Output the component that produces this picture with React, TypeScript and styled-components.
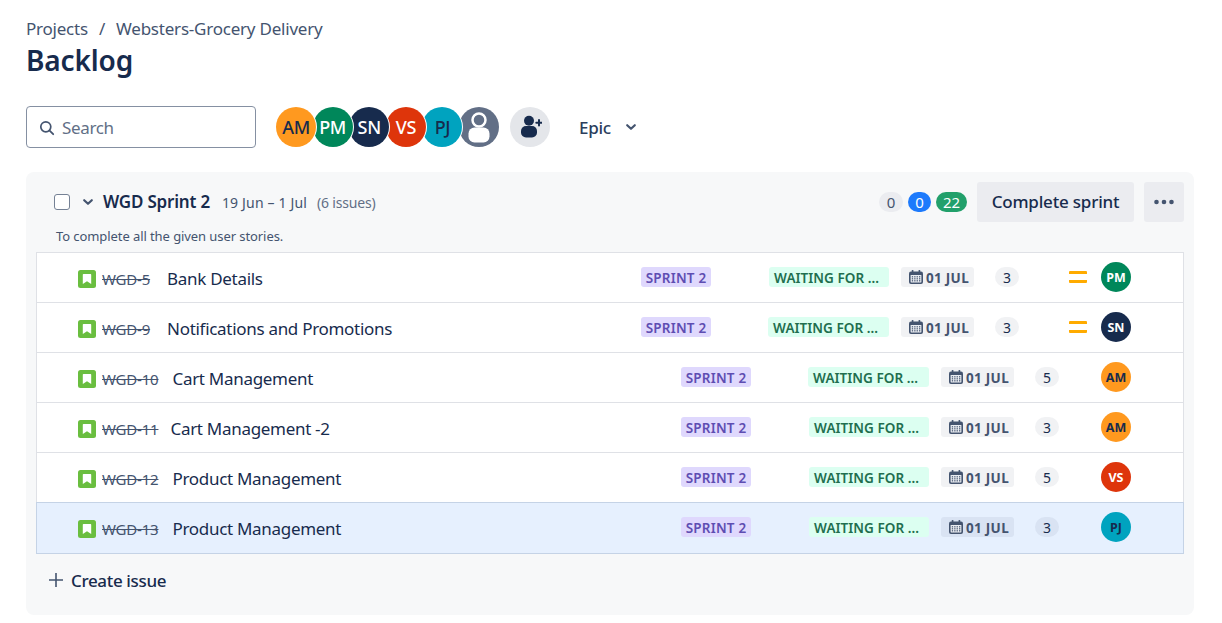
import React from "react";
import styled, { createGlobalStyle } from "styled-components";

const Global = createGlobalStyle`
  html, body { margin: 0; padding: 0; background: #fff; }
  body { font-family: "Noto Sans", "Open Sans", sans-serif; color: #172B4D; }
  * { box-sizing: border-box; }
`;

const Page = styled.div`
  width: 1222px;
  height: 623px;
  overflow: hidden;
  padding: 18px 28px 0 26px;
`;
const Crumbs = styled.div`
  display: flex;
  gap: 11px;
  height: 22px;
  line-height: 22px;
  font-size: 17px;
  letter-spacing: -0.22px;
  color: #44546F;
`;
const Title = styled.h1`
  margin: 0;
  height: 40px;
  line-height: 40px;
  font-size: 28px;
  font-weight: 600;
  letter-spacing: -0.15px;
  color: #172B4D;
`;
const Toolbar = styled.div`
  display: flex;
  align-items: center;
  height: 42px;
  margin-top: 26px;
`;
const SearchBox = styled.div`
  display: flex;
  align-items: center;
  gap: 6px;
  width: 230px;
  height: 42px;
  padding: 1px 12px 0 11px;
  border: 1px solid #8590A2;
  border-radius: 4px;
  font-size: 17px;
  letter-spacing: -0.35px;
  color: #626F86;
`;
const AvatarStack = styled.div`
  display: flex;
  margin-left: 20px;
  margin-top: -1px;
`;
const StackAvatar = styled.div<{ $bg: string; $fg: string; $order: number }>`
  position: relative;
  z-index: ${(p) => p.$order};
  width: 40px;
  height: 40px;
  margin-right: -3.4px;
  border-radius: 50%;
  overflow: hidden;
  display: flex;
  align-items: center;
  justify-content: center;
  background: ${(p) => p.$bg};
  color: ${(p) => p.$fg};
  box-shadow: 0 0 0 1px #fff;
  font-size: 18px;
  font-weight: 500;
  letter-spacing: -0.3px;
`;
const AddUser = styled.div`
  width: 40px;
  height: 40px;
  margin-left: 14.4px;
  margin-top: -1px;
  border-radius: 50%;
  background: #E4E6EA;
  display: flex;
  align-items: center;
  justify-content: center;
`;
const EpicFilter = styled.div`
  display: flex;
  align-items: center;
  gap: 12px;
  margin-left: 29px;
  font-size: 17px;
  font-weight: 500;
  letter-spacing: -0.3px;
  color: #2C3E5D;
`;
const Card = styled.section`
  margin-top: 24px;
  width: 1168px;
  height: 443px;
  padding: 10px 10px 0;
  border-radius: 8px;
  background: #F7F8F9;
`;
const CardHeader = styled.div`
  display: flex;
  align-items: center;
  height: 40px;
  padding-left: 18px;
`;
const Checkbox = styled.span`
  width: 16px;
  height: 16px;
  border: 1px solid #758195;
  border-radius: 3px;
  background: #fff;
`;
const SprintName = styled.span`
  margin-left: 7px;
  margin-top: -1px;
  font-size: 17px;
  font-weight: 600;
  letter-spacing: -0.2px;
`;
const Dates = styled.span`
  margin-left: 12px;
  font-size: 14px;
  letter-spacing: 0.17px;
  color: #44546F;
`;
const IssueCount = styled.span`
  margin-left: 10px;
  font-size: 14px;
  letter-spacing: -0.2px;
  color: #626F86;
`;
const HeaderRight = styled.div`
  margin-left: auto;
  display: flex;
  align-items: center;
`;
const Count = styled.span<{ $bg: string; $fg: string; $w: number; $gap: number }>`
  width: ${(p) => p.$w}px;
  margin-right: ${(p) => p.$gap}px;
  height: 20px;
  line-height: 20px;
  text-align: center;
  border-radius: 10px;
  font-size: 15px;
  background: ${(p) => p.$bg};
  color: ${(p) => p.$fg};
`;
const Button = styled.button`
  height: 40px;
  width: 157px;
  padding: 0 0 2px;
  border: 0;
  border-radius: 3px;
  background: #EBECF0;
  font-family: inherit;
  font-size: 17px;
  font-weight: 500;
  letter-spacing: -0.2px;
  color: #172B4D;
`;
const MoreButton = styled.button`
  width: 40px;
  height: 40px;
  margin-left: 10px;
  border: 0;
  padding: 0;
  border-radius: 3px;
  background: #EBECF0;
  display: flex;
  align-items: center;
  justify-content: center;
`;
const Goal = styled.div`
  height: 30px;
  padding: 6px 0 0 20px;
  line-height: 16px;
  font-size: 13px;
  letter-spacing: -0.08px;
  color: #44546F;
`;
const Table = styled.div`
  width: 1148px;
  border: 1px solid #DFE1E6;
  border-bottom: 0;
  background: #fff;
`;
const Row = styled.div<{ $selected?: boolean }>`
  display: flex;
  align-items: center;
  height: 50px;
  padding: 0 52px 0 41px;
  border-bottom: 1px solid #DFE1E6;
  background: #fff;
  ${(p) =>
    p.$selected &&
    "margin: -1px -1px 0; height: 52px; padding-bottom: 1px; border: 1px solid #C5D3E6; background: #E6F0FE;"}
`;
const Lead = styled.div`
  display: flex;
  align-items: center;
  margin-top: 2px;
`;
const IssueKey = styled.span`
  margin-left: 6px;
  font-size: 15px;
  letter-spacing: -0.2px;
  color: #44546F;
  text-decoration: line-through;
`;
const IssueTitle = styled.span<{ $gap: number }>`
  margin-left: ${(p) => p.$gap}px;
  font-size: 17px;
  letter-spacing: -0.3px;
  color: #172B4D;
`;
const Right = styled.div`
  margin-left: auto;
  margin-top: -1px;
  display: flex;
  align-items: center;
`;
const SprintTag = styled.span`
  width: 70px;
  height: 20px;
  line-height: 22px;
  text-align: center;
  border-radius: 3px;
  background: #DFD8FD;
  color: #5E4DB2;
  font-size: 13.5px;
  font-weight: 600;
  letter-spacing: 0.2px;
  white-space: nowrap;
`;
const StatusTag = styled.span<{ $wide?: boolean }>`
  width: ${(p) => (p.$wide ? 121 : 120)}px;
  margin-left: ${(p) => (p.$wide ? 57 : 58)}px;
  height: 20px;
  line-height: 22px;
  padding-left: 5px;
  border-radius: 3px;
  background: #DCFFF1;
  color: #216E4E;
  font-size: 13.5px;
  font-weight: 600;
  letter-spacing: 0.05px;
  white-space: nowrap;
`;
const DateChip = styled.span`
  display: flex;
  align-items: center;
  gap: 2px;
  width: 73px;
  height: 20px;
  margin-left: 12px;
  padding-left: 7px;
  border-radius: 3px;
  background: rgba(9, 30, 66, 0.06);
  color: #44546F;
  font-size: 13.5px;
  font-weight: 700;
  letter-spacing: 0.3px;
  white-space: nowrap;
`;
const DateText = styled.span`
  line-height: 22px;
  height: 20px;
`;
const Points = styled.span`
  width: 24px;
  height: 20px;
  margin-left: 21px;
  line-height: 21px;
  text-align: center;
  border-radius: 10px;
  background: rgba(9, 30, 66, 0.06);
  font-size: 14px;
  color: #172B4D;
`;
const Priority = styled.span`
  width: 18px;
  height: 12px;
  margin-left: 50px;
  border-top: 3px solid #FFAB00;
  border-bottom: 3px solid #FFAB00;
  border-radius: 1px;
`;
const Assignee = styled.div<{ $bg: string; $fg: string; $gap: number }>`
  width: 30px;
  height: 30px;
  margin-left: ${(p) => p.$gap}px;
  border-radius: 50%;
  display: flex;
  align-items: center;
  justify-content: center;
  background: ${(p) => p.$bg};
  color: ${(p) => p.$fg};
  font-size: 12.5px;
  font-weight: 700;
`;
const CreateIssue = styled.div`
  display: flex;
  align-items: center;
  gap: 7px;
  height: 52px;
  padding-left: 12px;
  font-size: 17px;
  font-weight: 500;
  letter-spacing: -0.35px;
  color: #172B4D;
`;

const people: Record<string, [string, string]> = {
  AM: ["#FF991F", "#172B4D"],
  PM: ["#00875A", "#fff"],
  SN: ["#172B4D", "#fff"],
  VS: ["#DE350B", "#fff"],
  PJ: ["#00A3BF", "#172B4D"],
};

const Chevron = ({ size = 16, style }: { size?: number; style?: React.CSSProperties }) => (
  <svg width={size} height={size} viewBox="0 0 16 16" style={style}>
    <path d="M4.2 6.2 8 9.8l3.8-3.6" fill="none" stroke="#44546F" strokeWidth="2.2" strokeLinecap="round" strokeLinejoin="round" />
  </svg>
);
const StoryIcon = () => (
  <svg width="18" height="18" viewBox="0 0 18 18">
    <rect width="18" height="18" rx="2.5" fill="#6ABE3F" />
    <path d="M5.5 4h7a.7.7 0 0 1 .7.7V14L9 11.2 4.8 14V4.7A.7.7 0 0 1 5.5 4z" fill="#fff" />
  </svg>
);
const CalendarIcon = () => (
  <svg width="16" height="16" viewBox="0 0 16 16">
    <rect x="1" y="2.5" width="14" height="12.5" rx="2" fill="#44546F" />
    <rect x="3.8" y="1" width="1.6" height="3" rx=".6" fill="#44546F" />
    <rect x="10.6" y="1" width="1.6" height="3" rx=".6" fill="#44546F" />
    <rect x="2.6" y="6" width="10.8" height="7.4" rx=".6" fill="#E9ECF1" />
    {[3.8, 6.2, 8.6, 11].map((x) =>
      [7.2, 9.2, 11.2].map((y) => <rect key={`${x}-${y}`} x={x} y={y} width="1.3" height="1.2" fill="#44546F" />)
    )}
  </svg>
);

const rows = [
  { k: "WGD-5", t: "Bank Details", gap: 17, who: "PM", pts: 3, pri: true },
  { k: "WGD-9", t: "Notifications and Promotions", gap: 17, who: "SN", pts: 3, pri: true, wide: true },
  { k: "WGD-10", t: "Cart Management", gap: 14, who: "AM", pts: 5, wide: true },
  { k: "WGD-11", t: "Cart Management -2", gap: 12, who: "AM", pts: 3 },
  { k: "WGD-12", t: "Product Management", gap: 14, who: "VS", pts: 5 },
  { k: "WGD-13", t: "Product Management", gap: 14, who: "PJ", pts: 3, selected: true },
];

const stack = Object.entries(people);

export default function App() {
  return (
    <Page>
      <Global />
      <Crumbs>
        <span>Projects</span>
        <span>/</span>
        <span>Websters-Grocery Delivery</span>
      </Crumbs>
      <Title>Backlog</Title>
      <Toolbar>
        <SearchBox>
          <svg width="18" height="18" viewBox="0 0 18 18">
            <circle cx="7.8" cy="7.8" r="5" fill="none" stroke="#44546F" strokeWidth="1.7" />
            <path d="m11.6 11.6 3.6 3.6" stroke="#44546F" strokeWidth="1.8" strokeLinecap="round" />
          </svg>
          Search
        </SearchBox>
        <AvatarStack>
          {stack.map(([n, [bg, fg]], i) => (
            <StackAvatar key={n} $bg={bg} $fg={fg} $order={6 - i}>{n}</StackAvatar>
          ))}
          <StackAvatar $bg="#626F86" $fg="#fff" $order={0}>
            <svg width="40" height="40" viewBox="0 0 40 40">
              <circle cx="20" cy="13" r="6.5" fill="none" stroke="#fff" strokeWidth="2.5" />
              <rect x="9.5" y="20.5" width="21" height="15" rx="6" fill="#fff" />
            </svg>
          </StackAvatar>
        </AvatarStack>
        <AddUser>
          <svg width="24" height="24" viewBox="0 0 24 24">
            <circle cx="11" cy="5.8" r="5" fill="#172B4D" />
            <rect x="3" y="11" width="16" height="11.5" rx="5" fill="#172B4D" />
            <path d="M21 5v5.4M18.3 7.7h5.4" stroke="#172B4D" strokeWidth="2" strokeLinecap="round" />
          </svg>
        </AddUser>
        <EpicFilter>
          Epic
          <Chevron />
        </EpicFilter>
      </Toolbar>
      <Card>
        <CardHeader>
          <Checkbox />
          <Chevron style={{ marginLeft: 10 }} />
          <SprintName>WGD Sprint 2</SprintName>
          <Dates>19 Jun – 1 Jul</Dates>
          <IssueCount>(6 issues)</IssueCount>
          <HeaderRight>
            <Count $bg="#EBECF0" $fg="#44546F" $w={24} $gap={5}>0</Count>
            <Count $bg="#1D7AFC" $fg="#fff" $w={23} $gap={5}>0</Count>
            <Count $bg="#22A06B" $fg="#fff" $w={31} $gap={10}>22</Count>
            <Button>Complete sprint</Button>
            <MoreButton>
              <svg width="24" height="8" viewBox="0 0 24 8">
                <circle cx="4.5" cy="4" r="2.3" fill="#44546F" />
                <circle cx="12" cy="4" r="2.3" fill="#44546F" />
                <circle cx="19.5" cy="4" r="2.3" fill="#44546F" />
              </svg>
            </MoreButton>
          </HeaderRight>
        </CardHeader>
        <Goal>To complete all the given user stories.</Goal>
        <Table>
          {rows.map((r) => {
            const [bg, fg] = people[r.who];
            return (
              <Row key={r.k} $selected={r.selected}>
                <Lead>
                  <StoryIcon />
                  <IssueKey>{r.k}</IssueKey>
                  <IssueTitle $gap={r.gap}>{r.t}</IssueTitle>
                </Lead>
                <Right>
                  <SprintTag>SPRINT 2</SprintTag>
                  <StatusTag $wide={r.wide}>WAITING FOR ...</StatusTag>
                  <DateChip><CalendarIcon /><DateText>01 JUL</DateText></DateChip>
                  <Points>{r.pts}</Points>
                  {r.pri && <Priority />}
                  <Assignee $bg={bg} $fg={fg} $gap={r.pri ? 14 : 42}>{r.who}</Assignee>
                </Right>
              </Row>
            );
          })}
        </Table>
        <CreateIssue>
          <svg width="16" height="16" viewBox="0 0 16 16">
            <path d="M8 1v14M1 8h14" stroke="#44546F" strokeWidth="1.6" />
          </svg>
          Create issue
        </CreateIssue>
      </Card>
    </Page>
  );
}
